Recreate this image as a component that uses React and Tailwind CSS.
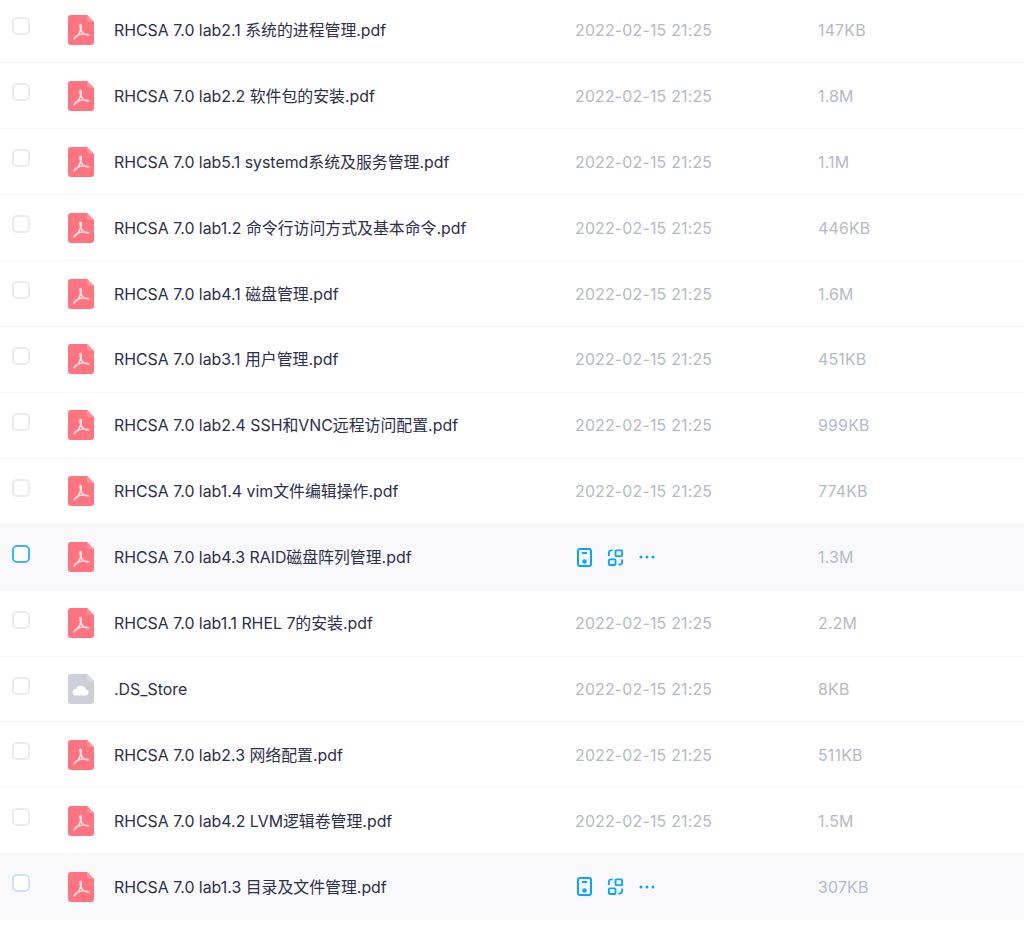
import React from 'react';

const files = [
    { name: 'RHCSA 7.0 lab2.1 系统的进程管理.pdf', size: '147KB' },
    { name: 'RHCSA 7.0 lab2.2 软件包的安装.pdf', size: '1.8M' },
    { name: 'RHCSA 7.0 lab5.1 systemd系统及服务管理.pdf', size: '1.1M' },
    { name: 'RHCSA 7.0 lab1.2 命令行访问方式及基本命令.pdf', size: '446KB' },
    { name: 'RHCSA 7.0 lab4.1 磁盘管理.pdf', size: '1.6M' },
    { name: 'RHCSA 7.0 lab3.1 用户管理.pdf', size: '451KB' },
    { name: 'RHCSA 7.0 lab2.4 SSH和VNC远程访问配置.pdf', size: '999KB' },
    { name: 'RHCSA 7.0 lab1.4 vim文件编辑操作.pdf', size: '774KB' },
    { name: 'RHCSA 7.0 lab4.3 RAID磁盘阵列管理.pdf', size: '1.3M', hover: true },
    { name: 'RHCSA 7.0 lab1.1 RHEL 7的安装.pdf', size: '2.2M' },
    { name: '.DS_Store', size: '8KB', cloud: true },
    { name: 'RHCSA 7.0 lab2.3 网络配置.pdf', size: '511KB' },
    { name: 'RHCSA 7.0 lab4.2 LVM逻辑卷管理.pdf', size: '1.5M' },
    { name: 'RHCSA 7.0 lab1.3 目录及文件管理.pdf', size: '307KB', hover: true, faint: true },
];

const PdfIcon = () => (
    <svg width="26" height="30" viewBox="0 0 26 30">
        <path d="M3 0H19L26 7V27A3 3 0 0 1 23 30H3A3 3 0 0 1 0 27V3A3 3 0 0 1 3 0Z" fill="#ff747f" />
        <path d="M19 0L26 7H21A2 2 0 0 1 19 5Z" fill="#ff8f98" />
        <g transform="translate(1.4 2.2) scale(0.88)">
            <path d="M12.2 8.5C11.6 10 13 14 14 16C15 18 18 20.5 21 20C18.5 18.5 13 19 9.5 20.5C7.5 21.5 6 23 5.5 24.5M12.2 8.5C13.5 8 14 10 13 13.5C12.5 15.5 11 19 8.5 22" fill="none" stroke="#ffe3e5" strokeWidth="1.9" strokeLinecap="round" />
        </g>
    </svg>
);

const CloudIcon = () => (
    <svg width="26" height="30" viewBox="0 0 26 30">
        <path d="M3 0H19L26 7V27A3 3 0 0 1 23 30H3A3 3 0 0 1 0 27V3A3 3 0 0 1 3 0Z" fill="#cdd0d6" />
        <path d="M19 0L26 7H21A2 2 0 0 1 19 5Z" fill="#dadce1" />
        <path d="M8 21.5A3.2 3.2 0 0 1 7.6 15.1A5.6 5.6 0 0 1 18 15.4A3.1 3.1 0 0 1 18 21.5Z" fill="#fff" />
    </svg>
);

const RowActions = () => (
    <div className="flex items-center gap-[15px] pl-[2px] text-[#06a7ff]">
        <svg width="15" height="19" viewBox="0 0 15 19" fill="none" stroke="currentColor" strokeWidth="2">
            <rect x="1" y="1" width="13" height="17" rx="2" />
            <path d="M5 5H10" />
            <circle cx="7.5" cy="13.5" r="1.3" fill="currentColor" />
        </svg>
        <svg width="17" height="17" viewBox="0 0 18 18" fill="none" stroke="currentColor" strokeWidth="2">
            <rect x="9" y="1.5" width="7" height="6" rx="1" />
            <rect x="2" y="11" width="7" height="6" rx="1" />
            <path d="M2 7.5V4A2.5 2.5 0 0 1 4.5 1.5H6" />
            <path d="M16 11V13.5A3 3 0 0 1 13 16.5H12" />
        </svg>
        <svg width="16" height="4" viewBox="0 0 16 4" fill="currentColor">
            <circle cx="2" cy="2" r="1.5" />
            <circle cx="8" cy="2" r="1.5" />
            <circle cx="14" cy="2" r="1.5" />
        </svg>
    </div>
);

const FileRow = ({ file }) => {
    const checkboxClass = file.hover
        ? file.faint
            ? 'border-[#cfe3f5] bg-white'
            : 'border-[#3db4fb] bg-white'
        : 'border-[#e9ebf2] bg-white';

    return (
        <div className={`h-[65.92px] flex items-center border-b ${file.hover ? 'bg-[#f9f9fc] border-transparent' : 'bg-white border-[#f5f6f9]'}`}>
            <div className="w-[68px] pl-[12px] shrink-0">
                <div className={`w-[18px] h-[18px] rounded-[5px] border-2 -mt-[7px] ${checkboxClass}`}></div>
            </div>
            <div className="w-[46px] shrink-0 flex">
                {file.cloud ? <CloudIcon /> : <PdfIcon />}
            </div>
            <div className="w-[461px] shrink-0 text-[15.88px] leading-[24px] mt-[2px] text-[#2c2f4a]">{file.name}</div>
            {file.hover ? (
                <div className="w-[243px] shrink-0">
                    <RowActions />
                </div>
            ) : (
                <div className="w-[243px] shrink-0 text-[15.88px] leading-[24px] mt-[2px] tracking-[0.2px] text-[#b5b9c7]">2022-02-15 21:25</div>
            )}
            <div className="text-[15.88px] leading-[24px] mt-[2px] tracking-[0.2px] text-[#b5b9c7]">{file.size}</div>
        </div>
    );
};

const App = () => {
    return (
        <div className="min-h-screen bg-white overflow-hidden font-['Inter','Noto_Sans_CJK_SC',sans-serif]">
            <div className="-mt-[2.5px]">
                {files.map(file => (
                    <FileRow key={file.name} file={file} />
                ))}
            </div>
        </div>
    );
};

export default App;
